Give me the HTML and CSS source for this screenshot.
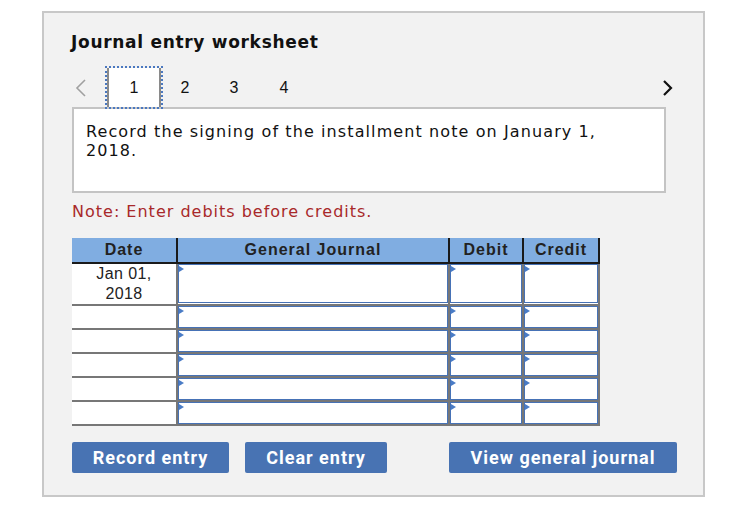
FILE: index.html
```html
<!DOCTYPE html>
<html lang="en">

<head>
    <meta charset="UTF-8">
    <meta name="viewport" content="width=device-width, initial-scale=1.0">
    <title>Journal entry worksheet</title>
    <link rel="stylesheet" href="styles.css">
</head>

<body>
    <div class="worksheet">
        <h2 class="title">Journal entry worksheet</h2>

        <div class="tabs">
            <span class="arrow prev">
                <svg width="12" height="18" viewBox="0 0 12 18"><polyline points="10,1 2,9 10,17" fill="none" stroke="#a0a0a0" stroke-width="1.6"/></svg>
            </span>
            <span class="tab active">1</span>
            <span class="tab">2</span>
            <span class="tab">3</span>
            <span class="tab">4</span>
            <span class="arrow next">
                <svg width="12" height="18" viewBox="0 0 12 18"><polyline points="2,2 9,9 2,16" fill="none" stroke="#111" stroke-width="2.2"/></svg>
            </span>
        </div>

        <div class="instruction">
            Record the signing of the installment note on January 1,<br>2018.
        </div>

        <p class="note">Note: Enter debits before credits.</p>

        <table class="journal">
            <colgroup>
                <col class="col-date">
                <col class="col-account">
                <col class="col-debit">
                <col class="col-credit">
            </colgroup>
            <thead>
                <tr>
                    <th>Date</th>
                    <th>General Journal</th>
                    <th>Debit</th>
                    <th>Credit</th>
                </tr>
            </thead>
            <tbody>
                <tr class="first">
                    <td class="date">Jan 01,<br>2018</td>
                    <td><div class="field"></div></td>
                    <td><div class="field"></div></td>
                    <td><div class="field"></div></td>
                </tr>
                <tr>
                    <td class="date"></td>
                    <td><div class="field"></div></td>
                    <td><div class="field"></div></td>
                    <td><div class="field"></div></td>
                </tr>
                <tr>
                    <td class="date"></td>
                    <td><div class="field"></div></td>
                    <td><div class="field"></div></td>
                    <td><div class="field"></div></td>
                </tr>
                <tr>
                    <td class="date"></td>
                    <td><div class="field"></div></td>
                    <td><div class="field"></div></td>
                    <td><div class="field"></div></td>
                </tr>
                <tr>
                    <td class="date"></td>
                    <td><div class="field"></div></td>
                    <td><div class="field"></div></td>
                    <td><div class="field"></div></td>
                </tr>
                <tr>
                    <td class="date"></td>
                    <td><div class="field"></div></td>
                    <td><div class="field"></div></td>
                    <td><div class="field"></div></td>
                </tr>
            </tbody>
        </table>

        <div class="buttons">
            <button class="btn record">Record entry</button>
            <button class="btn clear">Clear entry</button>
            <button class="btn view">View general journal</button>
        </div>
    </div>
</body>

</html>
```

FILE: styles.css
```css
body {
    margin: 0;
    background-color: #fff;
    font-family: "DejaVu Sans", Verdana, sans-serif;
}

.worksheet {
    margin: 11px 0 0 42px;
    width: 594px;
    padding: 19px 37px 22px 28px;
    background-color: #f2f2f2;
    border: 2px solid #c8c8c8;
}

.title {
    margin: 0 0 16px -1px;
    font-size: 17px;
    line-height: 20px;
    font-weight: bold;
    letter-spacing: 0.7px;
    color: #111;
}

.tabs {
    display: flex;
    align-items: center;
    height: 39px;
    font-family: "Liberation Sans", Arial, sans-serif;
    font-size: 16px;
    color: #111;
}

.arrow {
    display: flex;
    align-items: center;
    height: 39px;
}

.prev {
    width: 35px;
    padding-left: 3px;
    box-sizing: border-box;
}

.next {
    margin-left: auto;
    margin-right: -8px;
}

.tab {
    width: 50px;
    text-align: center;
    line-height: 39px;
}

.tab:nth-child(3) {
    width: 48px;
}

.tab.active {
    width: 50px;
    height: 39px;
    background-color: #fff;
    border-left: 2px solid #8a8a8a;
    border-right: 2px solid #8a8a8a;
    outline: 2px dotted #4a78c0;
}

.instruction {
    height: 60px;
    padding: 13px 12px 9px 12px;
    background-color: #fff;
    border: 2px solid #c4c4c4;
    font-size: 16px;
    line-height: 19px;
    letter-spacing: 1.1px;
    color: #111;
}

.note {
    margin: 9px 0 16px 0;
    font-size: 16px;
    line-height: 20px;
    letter-spacing: 1px;
    color: #a8292a;
}

.journal {
    width: 527px;
    border-collapse: collapse;
    table-layout: fixed;
    font-family: "Liberation Sans", Arial, sans-serif;
    font-size: 16px;
    color: #222;
}

.col-date {
    width: 105px;
}

.col-account {
    width: 272px;
}

.col-debit {
    width: 74px;
}

.col-credit {
    width: 76px;
}

.journal th {
    height: 24px;
    padding: 0;
    background-color: #80ade1;
    border-left: 2px solid #1a1a1a;
    border-right: 2px solid #1a1a1a;
    border-bottom: 2px solid #1a1a1a;
    font-weight: bold;
    letter-spacing: 1px;
}

.journal th:first-child {
    border-left: none;
}

.journal td {
    height: 22px;
    padding: 0;
    background-color: #fff;
    border: 2px solid #777;
    vertical-align: top;
}

.journal td:first-child {
    border-left: none;
}

.journal thead + tbody tr:first-child td {
    border-top: 2px solid #1a1a1a;
}

.journal tr.first td {
    height: 39px;
}

.journal td.date {
    text-align: center;
    line-height: 20px;
    letter-spacing: 0.4px;
    vertical-align: middle;
}

.field {
    position: relative;
    box-sizing: border-box;
    height: 22px;
    border: 1px solid #4672b6;
    background-color: #fff;
}

.journal tr.first .field {
    height: 39px;
}

.field::before {
    content: "";
    position: absolute;
    top: 1px;
    left: 0;
    border-top: 3px solid transparent;
    border-bottom: 3px solid transparent;
    border-left: 5px solid #4a7cc6;
}

.buttons {
    display: flex;
    margin-top: 16px;
}

.btn {
    flex-shrink: 0;
    height: 31px;
    padding: 0;
    background-color: #4873b3;
    border: none;
    border-radius: 2px;
    font-family: Roboto, "Liberation Sans", sans-serif;
    font-size: 18px;
    font-weight: bold;
    letter-spacing: 1px;
    color: #fff;
}

.record {
    width: 157px;
    margin-right: 16px;
}

.clear {
    width: 142px;
    margin-right: 62px;
}

.view {
    width: 228px;
}
```
